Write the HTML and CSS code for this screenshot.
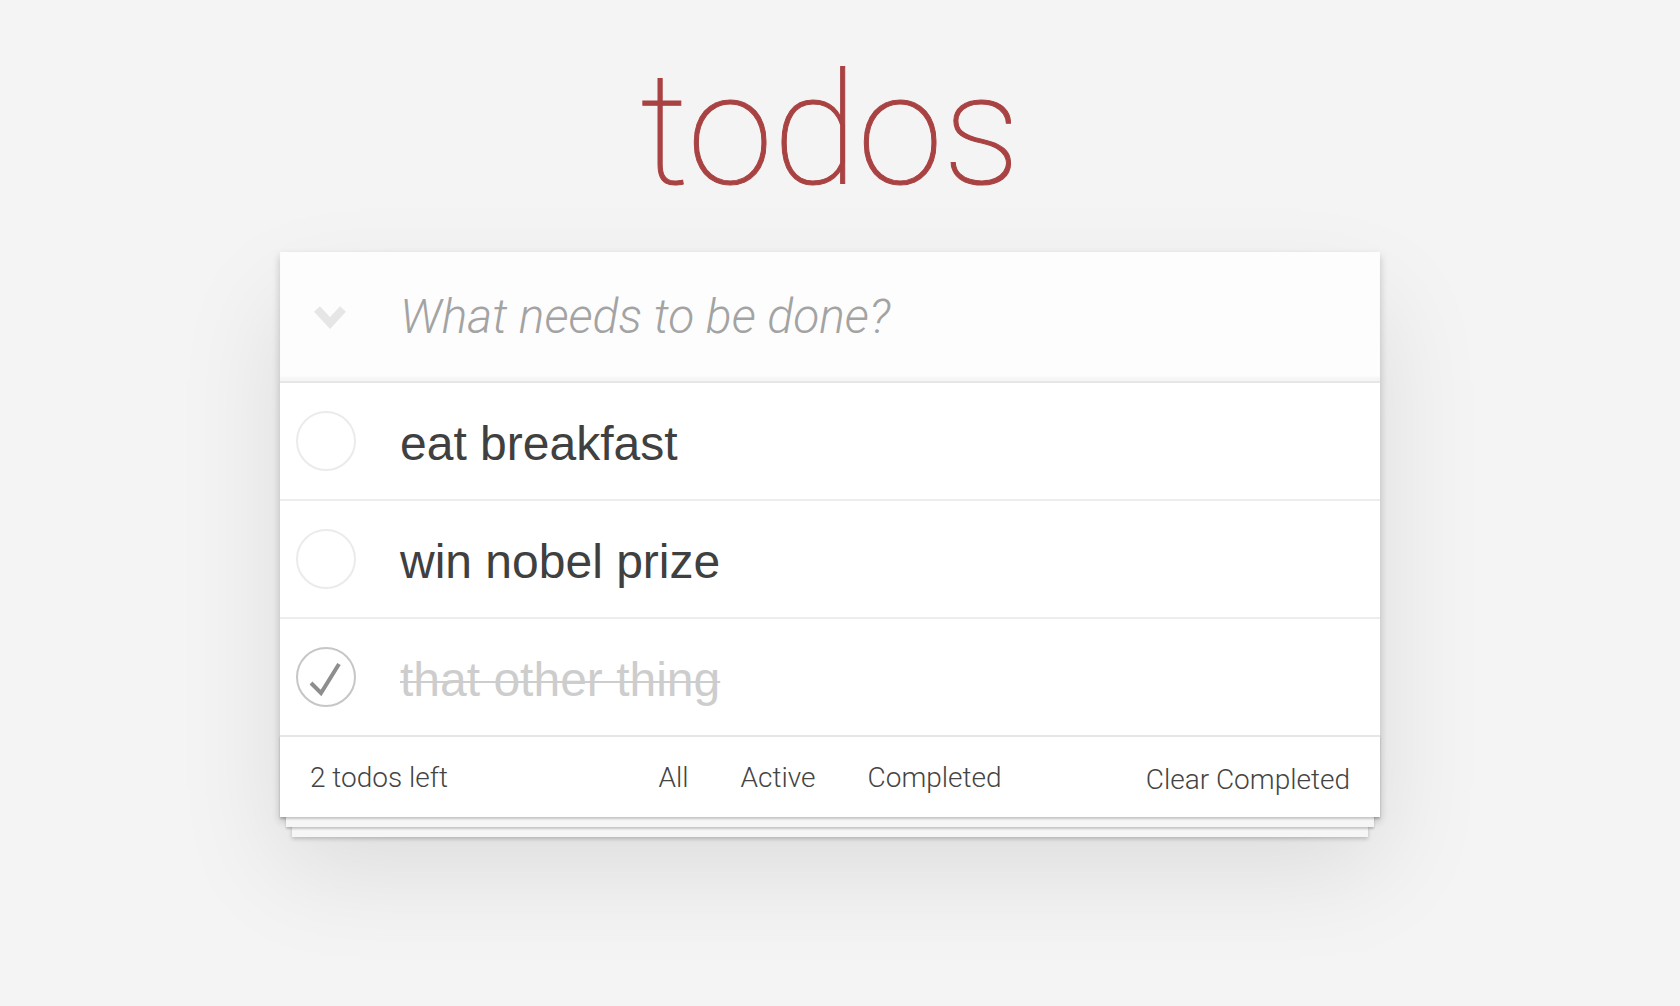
FILE: index.html
```html
<!DOCTYPE html>
<html lang="en">
<head>
<meta charset="utf-8">
<title>todos</title>
<link rel="stylesheet" href="styles.css">
</head>
<body>
<section class="app">
  <h1 class="title">todos</h1>
  <div class="card">
    <header class="new-row">
      <span class="toggle-all">
        <svg width="32" height="24" viewBox="0 0 32 24"><path d="M3 4 L16 18 L29 4" fill="none" stroke="#e6e6e6" stroke-width="8" stroke-linejoin="miter"/></svg>
      </span>
      <input class="new-todo" type="text" placeholder="What needs to be done?">
    </header>
    <ul class="list">
      <li class="item">
        <span class="toggle"><svg width="62" height="62" viewBox="0 0 62 62"><circle cx="31" cy="31" r="29" fill="none" stroke="#ebebeb" stroke-width="2"/></svg></span>
        <span class="label">eat breakfast</span>
      </li>
      <li class="item">
        <span class="toggle"><svg width="62" height="62" viewBox="0 0 62 62"><circle cx="31" cy="31" r="29" fill="none" stroke="#ebebeb" stroke-width="2"/></svg></span>
        <span class="label">win nobel prize</span>
      </li>
      <li class="item done">
        <span class="toggle"><svg width="62" height="62" viewBox="0 0 62 62"><circle cx="31" cy="31" r="29" fill="none" stroke="#c6c6c6" stroke-width="2"/><path d="M16 37 L26 47 L44 18" fill="none" stroke="#8e8e8e" stroke-width="4" stroke-linecap="butt"/></svg></span>
        <span class="label">that other thing</span>
      </li>
    </ul>
    <footer class="footer">
      <span class="count">2 todos left</span>
      <nav class="filters">
        <a class="filter">All</a>
        <a class="filter">Active</a>
        <a class="filter">Completed</a>
      </nav>
      <span class="clear">Clear Completed</span>
    </footer>
  </div>
</section>
</body>
</html>
```
FILE: styles.css
```css
html, body {
  margin: 0;
  padding: 0;
}
html {
  background: #f4f4f4;
}
body {
  min-height: 1006px;
  padding-right: 20px;
  box-sizing: border-box;
  background: #f4f4f4;
  font-family: "Liberation Sans", Arial, sans-serif;
  color: #4d4d4d;
}
.app {
  width: 1100px;
  margin: 0 auto;
  padding-top: 56px;
  padding-bottom: 150px;
}
.title {
  margin: 0 0 46px;
  height: 150px;
  font-family: Roboto, "Liberation Sans", sans-serif;
  font-weight: 100;
  font-size: 155px;
  line-height: 148px;
  text-align: center;
  color: #a94242;
  -webkit-text-stroke: 1px #a94242;
}
.card {
  background: #fff;
  box-shadow: 0 4px 8px 0 rgba(0,0,0,0.2), 0 50px 100px 0 rgba(0,0,0,0.1);
}
.new-row {
  display: flex;
  align-items: center;
  height: 129px;
  background: rgba(0,0,0,0.008);
  box-shadow: inset 0 -4px 2px rgba(0,0,0,0.03);
  border-bottom: 2px solid #e6e6e6;
}
.toggle-all {
  width: 100px;
  display: flex;
  justify-content: center;
  align-items: center;
}
.new-todo {
  flex: 1;
  border: 0;
  outline: none;
  background: transparent;
  margin: 0;
  padding: 0 30px 0 20px;
  height: 129px;
  font-family: Roboto, "Liberation Sans", sans-serif;
  font-size: 48px;
  font-weight: 300;
  font-style: italic;
  color: #4d4d4d;
}
.new-todo::placeholder {
  color: #a3a3a3;
  font-style: italic;
  font-weight: 300;
}
.list {
  list-style: none;
  margin: 0;
  padding: 0;
}
.item {
  display: flex;
  align-items: center;
  border-bottom: 2px solid #ededed;
}
.item:last-child {
  border-bottom: 0;
}
.toggle {
  width: 92px;
  display: flex;
  justify-content: center;
  align-items: center;
}
.toggle svg {
  display: block;
}
.label {
  padding: 33px 0 27px 28px;
  font-size: 48px;
  line-height: 56px;
  color: #404040;
}
.done .label {
  color: #cdcdcd;
  text-decoration: line-through;
  text-decoration-thickness: 2px;
}
.footer {
  display: grid;
  grid-template-columns: 1fr auto 1fr;
  align-items: center;
  height: 80px;
  padding: 0 30px;
  border-top: 2px solid #e6e6e6;
  font-family: Roboto, "Liberation Sans", sans-serif;
  font-weight: 300;
  font-size: 28px;
  color: #444;
  box-shadow: 0 2px 2px rgba(0,0,0,0.2),
              0 16px 0 -6px #f6f6f6,
              0 18px 2px -6px rgba(0,0,0,0.2),
              0 32px 0 -12px #f6f6f6,
              0 34px 4px -12px rgba(0,0,0,0.2);
}
.count {
  justify-self: start;
}
.filters {
  display: flex;
  gap: 52px;
}
.filter {
  color: #444;
  text-decoration: none;
}
.clear {
  justify-self: end;
  padding-top: 4px;
}
```
